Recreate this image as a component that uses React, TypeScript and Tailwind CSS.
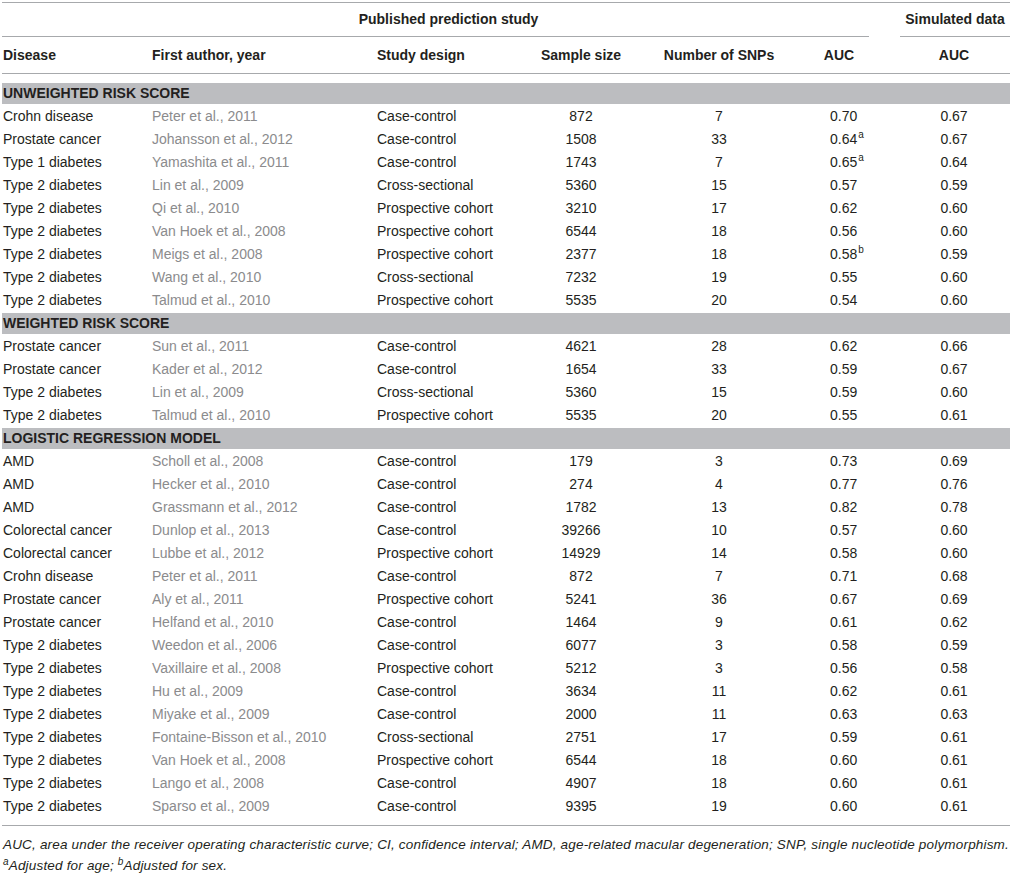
import React from "react";

type Row = [string, string, string, string, string, string, string?, string?];

const unweighted: Row[] = [
  ["Crohn disease", "Peter et al., 2011", "Case-control", "872", "7", "0.70", "", "0.67"],
  ["Prostate cancer", "Johansson et al., 2012", "Case-control", "1508", "33", "0.64", "a", "0.67"],
  ["Type 1 diabetes", "Yamashita et al., 2011", "Case-control", "1743", "7", "0.65", "a", "0.64"],
  ["Type 2 diabetes", "Lin et al., 2009", "Cross-sectional", "5360", "15", "0.57", "", "0.59"],
  ["Type 2 diabetes", "Qi et al., 2010", "Prospective cohort", "3210", "17", "0.62", "", "0.60"],
  ["Type 2 diabetes", "Van Hoek et al., 2008", "Prospective cohort", "6544", "18", "0.56", "", "0.60"],
  ["Type 2 diabetes", "Meigs et al., 2008", "Prospective cohort", "2377", "18", "0.58", "b", "0.59"],
  ["Type 2 diabetes", "Wang et al., 2010", "Cross-sectional", "7232", "19", "0.55", "", "0.60"],
  ["Type 2 diabetes", "Talmud et al., 2010", "Prospective cohort", "5535", "20", "0.54", "", "0.60"],
];

const weighted: Row[] = [
  ["Prostate cancer", "Sun et al., 2011", "Case-control", "4621", "28", "0.62", "", "0.66"],
  ["Prostate cancer", "Kader et al., 2012", "Case-control", "1654", "33", "0.59", "", "0.67"],
  ["Type 2 diabetes", "Lin et al., 2009", "Cross-sectional", "5360", "15", "0.59", "", "0.60"],
  ["Type 2 diabetes", "Talmud et al., 2010", "Prospective cohort", "5535", "20", "0.55", "", "0.61"],
];

const logistic: Row[] = [
  ["AMD", "Scholl et al., 2008", "Case-control", "179", "3", "0.73", "", "0.69"],
  ["AMD", "Hecker et al., 2010", "Case-control", "274", "4", "0.77", "", "0.76"],
  ["AMD", "Grassmann et al., 2012", "Case-control", "1782", "13", "0.82", "", "0.78"],
  ["Colorectal cancer", "Dunlop et al., 2013", "Case-control", "39266", "10", "0.57", "", "0.60"],
  ["Colorectal cancer", "Lubbe et al., 2012", "Prospective cohort", "14929", "14", "0.58", "", "0.60"],
  ["Crohn disease", "Peter et al., 2011", "Case-control", "872", "7", "0.71", "", "0.68"],
  ["Prostate cancer", "Aly et al., 2011", "Prospective cohort", "5241", "36", "0.67", "", "0.69"],
  ["Prostate cancer", "Helfand et al., 2010", "Case-control", "1464", "9", "0.61", "", "0.62"],
  ["Type 2 diabetes", "Weedon et al., 2006", "Case-control", "6077", "3", "0.58", "", "0.59"],
  ["Type 2 diabetes", "Vaxillaire et al., 2008", "Prospective cohort", "5212", "3", "0.56", "", "0.58"],
  ["Type 2 diabetes", "Hu et al., 2009", "Case-control", "3634", "11", "0.62", "", "0.61"],
  ["Type 2 diabetes", "Miyake et al., 2009", "Case-control", "2000", "11", "0.63", "", "0.63"],
  ["Type 2 diabetes", "Fontaine-Bisson et al., 2010", "Cross-sectional", "2751", "17", "0.59", "", "0.61"],
  ["Type 2 diabetes", "Van Hoek et al., 2008", "Prospective cohort", "6544", "18", "0.60", "", "0.61"],
  ["Type 2 diabetes", "Lango et al., 2008", "Case-control", "4907", "18", "0.60", "", "0.61"],
  ["Type 2 diabetes", "Sparso et al., 2009", "Case-control", "9395", "19", "0.60", "", "0.61"],
];

function DataRow({ r }: { r: Row }) {
  return (
    <div className="flex h-[23px] items-center text-[14px] text-[#231f20]">
      <div className="w-[150px] pl-[1px]">{r[0]}</div>
      <div className="w-[225px] text-[#8b8b8d]">{r[1]}</div>
      <div className="w-[144px]">{r[2]}</div>
      <div className="w-[120px] text-center">{r[3]}</div>
      <div className="w-[156px] text-center">{r[4]}</div>
      <div className="w-[84px] pl-[33px]">
        <span className="relative">
          {r[5]}
          {r[6] ? (
            <sup className="absolute left-full top-[-1px] pl-[1px] text-[10px] leading-none">{r[6]}</sup>
          ) : null}
        </span>
      </div>
      <div className="w-[19px]" />
      <div className="w-[108px] text-center">{r[7]}</div>
    </div>
  );
}

function Section({ title }: { title: string }) {
  return (
    <div className="flex h-[23px] items-center">
      <div className="flex h-[21px] w-full items-center bg-[#bcbdc0] pl-[1px] text-[14px] font-bold text-[#231f20]">
        {title}
      </div>
    </div>
  );
}

export default function App() {
  return (
    <div
      className="w-[1013px] bg-white pl-[2px] pt-[2px]"
      style={{ fontFamily: '"Liberation Sans", Arial, sans-serif' }}
    >
      <div className="w-[1008px]">
        <div className="h-px bg-[#a7a9ac]" />
        {/* header row 1 */}
        <div className="flex h-[34px] text-[14px] font-bold text-[#231f20]">
          <div className="flex w-[879px] flex-col">
            <div className="flex flex-1 items-center justify-center pl-[14px]">Published prediction study</div>
            <div className="h-px w-[867px] bg-[#a7a9ac]" />
          </div>
          <div className="w-[19px]" />
          <div className="flex w-[110px] flex-col">
            <div className="flex flex-1 items-center justify-center">Simulated data</div>
            <div className="h-px bg-[#a7a9ac]" />
          </div>
        </div>
        {/* header row 2 */}
        <div className="flex h-[36px] items-center text-[14px] font-bold text-[#231f20]">
          <div className="w-[150px] pl-[1px]">Disease</div>
          <div className="w-[225px]">First author, year</div>
          <div className="w-[144px]">Study design</div>
          <div className="w-[120px] text-center">Sample size</div>
          <div className="w-[156px] text-center">Number of SNPs</div>
          <div className="w-[84px] text-center">AUC</div>
          <div className="w-[19px]" />
          <div className="w-[108px] text-center">AUC</div>
        </div>
        <div className="h-px bg-[#a7a9ac]" />
        <div className="h-[8px]" />
        <Section title="UNWEIGHTED RISK SCORE" />
        {unweighted.map((r, i) => (
          <DataRow key={"u" + i} r={r} />
        ))}
        <Section title="WEIGHTED RISK SCORE" />
        {weighted.map((r, i) => (
          <DataRow key={"w" + i} r={r} />
        ))}
        <Section title="LOGISTIC REGRESSION MODEL" />
        {logistic.map((r, i) => (
          <DataRow key={"l" + i} r={r} />
        ))}
        <div className="h-[7px]" />
        <div className="h-px bg-[#a7a9ac]" />
        <div className="pl-[1px] pt-[8px] text-[13.5px] italic leading-[21px] tracking-[0.18px] text-[#231f20]">
          <div className="whitespace-nowrap">
            AUC, area under the receiver operating characteristic curve; CI, confidence interval; AMD, age-related macular degeneration; SNP, single nucleotide polymorphism.
          </div>
          <div>
            <sup className="text-[10px]">a</sup>Adjusted for age; <sup className="text-[10px]">b</sup>Adjusted for sex.
          </div>
        </div>
      </div>
    </div>
  );
}
